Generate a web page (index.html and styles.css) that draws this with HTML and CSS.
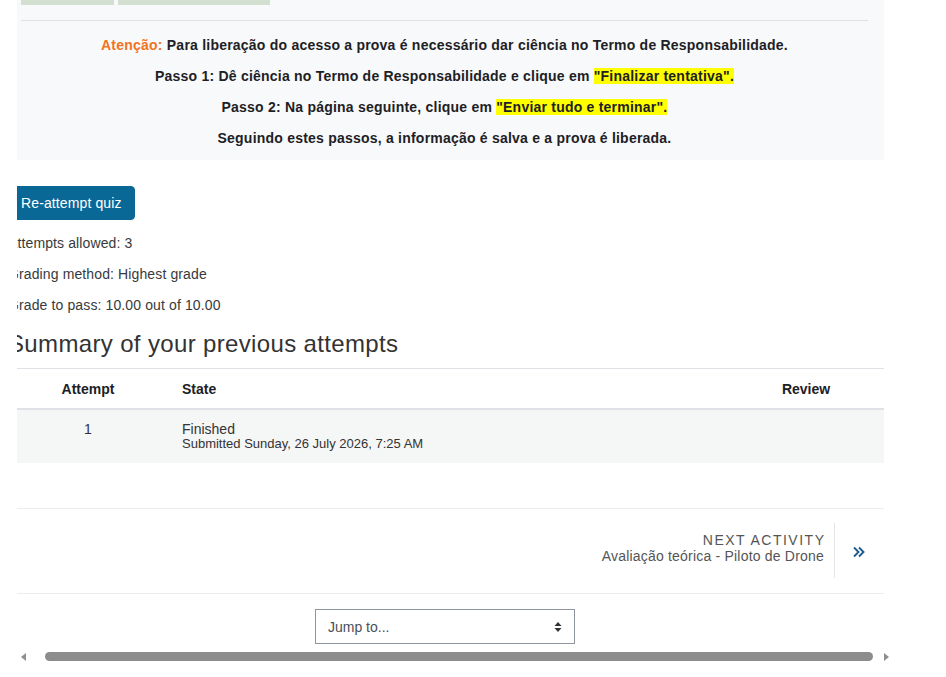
FILE: index.html
```html
<!DOCTYPE html>
<html lang="pt">
<head>
<meta charset="utf-8">
<title>Quiz</title>
<link rel="stylesheet" href="styles.css">
</head>
<body>
<div class="viewport">
  <div class="page">
    <section class="notice">
      <div class="tabs"><span class="tab tab-a"></span><span class="tab tab-b"></span></div>
      <div class="notice-body">
        <p><span class="warn">Atenção:</span> Para liberação do acesso a prova é necessário dar ciência no Termo de Responsabilidade.</p>
        <p>Passo 1: Dê ciência no Termo de Responsabilidade e clique em <mark>"Finalizar tentativa".</mark></p>
        <p>Passo 2: Na página seguinte, clique em <mark>"Enviar tudo e terminar".</mark></p>
        <p>Seguindo estes passos, a informação é salva e a prova é liberada.</p>
      </div>
    </section>

    <button class="btn-primary" type="button">Re-attempt quiz</button>

    <div class="info">
      <p>Attempts allowed: 3</p>
      <p>Grading method: Highest grade</p>
      <p>Grade to pass: 10.00 out of 10.00</p>
    </div>

    <h2 class="summary-title">Summary of your previous attempts</h2>

    <table class="attempts">
      <thead>
        <tr><th class="c-attempt">Attempt</th><th class="c-state">State</th><th class="c-review">Review</th></tr>
      </thead>
      <tbody>
        <tr>
          <td class="c-attempt">1</td>
          <td class="c-state"><div class="state-main">Finished</div><div class="state-sub">Submitted Sunday, 26 July 2026, 7:25 AM</div></td>
          <td class="c-review"></td>
        </tr>
      </tbody>
    </table>

    <nav class="activity-nav">
      <a class="next-link" href="#">
        <span class="next-text"><span class="next-label">NEXT ACTIVITY</span><span class="next-name">Avaliação teórica - Piloto de Drone</span></span>
        <svg class="next-icon" width="14" height="14" viewBox="0 0 14 14" aria-hidden="true"><path d="M2 2.5 L6.5 7 L2 11.5 M7 2.5 L11.5 7 L7 11.5" fill="none" stroke="#1d5b8c" stroke-width="1.9"/></svg>
      </a>
    </nav>

    <div class="jump-wrap">
      <div class="jump">
        <span>Jump to...</span>
        <svg width="8" height="12" viewBox="0 0 8 12" aria-hidden="true"><path d="M4 1 L7.5 5 L0.5 5 Z M0.5 7 L7.5 7 L4 11 Z" fill="#333"/></svg>
      </div>
    </div>
  </div>
</div>
<div class="hscroll">
  <span class="arrow-left"></span>
  <span class="thumb"></span>
  <span class="arrow-right"></span>
</div>
</body>
</html>
```

FILE: styles.css
```css
html, body {
  margin: 0;
  padding: 0;
  background: #fff;
}
body {
  font-family: "Liberation Sans", Arial, sans-serif;
  color: #1d2125;
}
.viewport {
  margin-left: 17px;
  width: 867px;
  overflow: hidden;
  padding-bottom: 4px;
}
.page {
  margin-left: -9px;
  width: 876px;
}

/* notice box */
.notice {
  background: #f8f9fa;
  padding: 0 16px 12px 13px;
}
.tabs {
  display: flex;
  gap: 4px;
  height: 20px;
  border-bottom: 1px solid #dee2e6;
}
.tab {
  display: block;
  height: 5px;
  background: #d3dfd0;
}
.tab-a { width: 93px; }
.tab-b { width: 152px; }
.notice-body {
  padding-top: 14px;
}
.notice-body p {
  margin: 0 0 11px;
  font-size: 14px;
  letter-spacing: 0.22px;
  line-height: 20px;
  font-weight: bold;
  text-align: center;
  color: #1d2125;
}
.notice-body p:last-child { margin-bottom: 0; }
.warn { color: #f0731f; }
mark {
  background: #ffff00;
  color: #1d2125;
  padding: 0;
}

/* button */
.btn-primary {
  display: block;
  margin-top: 26px;
  padding: 6px 12px 6px 12px;
  border: 1px solid #0a6897;
  border-radius: 4px;
  background: #0a6897;
  color: #fff;
  font-family: "Liberation Sans", Arial, sans-serif;
  font-size: 14px;
  letter-spacing: 0.12px;
  line-height: 20px;
}

/* info */
.info {
  margin-top: 13px;
}
.info p {
  margin: 0 0 11px;
  font-size: 14px;
  letter-spacing: 0.12px;
  line-height: 20px;
  color: #373a3c;
}
.info p:last-child { margin-bottom: 0; }

.summary-title {
  margin: 14px 0 10px;
  font-size: 24px;
  letter-spacing: 0.35px;
  line-height: 29px;
  font-weight: normal;
  color: #333;
}

/* table */
.attempts {
  width: 876px;
  border-collapse: collapse;
  border-top: 1px solid #dee2e6;
  font-size: 14px;
}
.attempts th {
  font-weight: bold;
  color: #1d2125;
  height: 39px;
  padding: 0;
  border-bottom: 2px solid #dee2e6;
  vertical-align: middle;
}
.attempts td {
  background: #f5f6f6;
  padding: 11px 0 12px;
  vertical-align: top;
  color: #333;
}
.c-attempt { width: 160px; text-align: center; }
.c-state { text-align: left; padding-left: 14px !important; }
.c-review { width: 156px; text-align: center; }
.state-main { font-size: 14px; line-height: 16px; }
.state-sub { font-size: 13px; line-height: 14px; }
.attempts td.c-attempt { line-height: 16px; }

/* activity nav */
.activity-nav {
  margin-top: 45px;
  border-top: 1px solid #ececec;
  border-bottom: 1px solid #ececec;
  padding: 14px 0 15px;
  display: flex;
  justify-content: flex-end;
}
.next-link {
  display: flex;
  align-items: center;
  text-decoration: none;
  padding-right: 18px;
}
.next-text {
  display: flex;
  flex-direction: column;
  align-items: flex-end;
  padding: 9px 10px 14px 0;
  border-right: 1px solid #e6e6e6;
  color: #555;
  font-size: 14px;
  line-height: 16px;
}
.next-label {
  letter-spacing: 1.5px;
  margin-right: -1.5px;
}
.next-name {
  letter-spacing: 0.2px;
}
.next-icon {
  margin-left: 17px;
  margin-top: 2px;
}

/* jump */
.jump-wrap {
  display: flex;
  justify-content: center;
  padding-right: 2px;
  margin-top: 15px;
}
.jump {
  box-sizing: border-box;
  width: 260px;
  height: 35px;
  border: 1px solid #8f959e;
  background: #fff;
  display: flex;
  align-items: center;
  justify-content: space-between;
  padding: 0 12px 0 12px;
  font-size: 14px;
  color: #495057;
}

/* fake horizontal scrollbar */
.hscroll {
  margin-left: 17px;
  width: 878px;
  height: 17px;
  display: flex;
  align-items: center;
}
.arrow-left {
  width: 0;
  height: 0;
  margin-left: 4px;
  border-top: 4.5px solid transparent;
  border-bottom: 4.5px solid transparent;
  border-right: 5px solid #8f8f8f;
}
.thumb {
  display: block;
  height: 9px;
  width: 828px;
  margin-left: 19px;
  border-radius: 5px;
  background: #8c8c8c;
}
.arrow-right {
  width: 0;
  height: 0;
  margin-left: 11px;
  border-top: 4.5px solid transparent;
  border-bottom: 4.5px solid transparent;
  border-left: 5px solid #8f8f8f;
}
```
